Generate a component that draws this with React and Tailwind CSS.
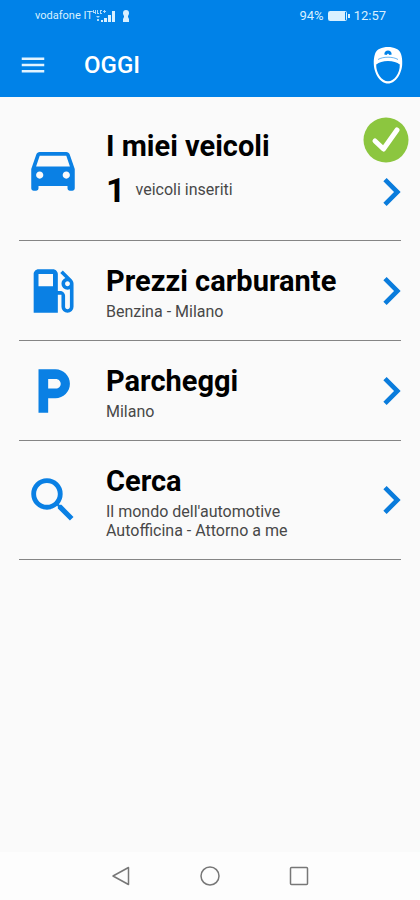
import React from 'react';
import {
    MdDirectionsCar,
    MdLocalGasStation,
    MdLocalParking,
    MdMenu,
    MdSearch,
} from 'react-icons/md';

const Chevron = () => (
    <svg viewBox="8.59 6 7.41 12" className="h-7 w-[18px] fill-current" aria-hidden="true">
        <path d="M10 6 8.59 7.41 13.17 12l-4.58 4.59L10 18l6-6z" />
    </svg>
);

const DriverIcon = () => (
    <svg viewBox="0 0 30 38" className="h-[38px] w-[30px]" aria-hidden="true">
        <path
            d="M15 1C9 1 3.5 3 2 8 1 11 .6 14 .8 18 1 27 7 37.5 15 37.5S29 27 29.2 18c.2-4-.2-7-1.2-10C26.5 3 21 1 15 1z"
            fill="#fff"
        />
        <path
            d="M3.2 18.5C6 16.2 10 15 15 15s9 1.2 11.8 3.5C27 27 21.5 35.3 15 35.3S3 27 3.2 18.5z"
            fill="#0082e8"
        />
        <path d="M5 13.5c2.6-1.5 6-2.3 10-2.3s7.4.8 10 2.3" fill="none" stroke="#0082e8" strokeWidth="0.6" />
        <path d="M11.3 8.5C11.3 6 13 4.5 15 4.5S18.7 6 18.7 8.5l-2.2.5L15 7.4 13.5 9z" fill="#0082e8" />
    </svg>
);

const StatusBar = () => (
    <div className="flex h-8 items-center justify-between pr-[34px] pl-[35px] text-[#d8f0ff]">
        <div className="flex items-center">
            <span className="text-[11px]">vodafone IT</span>
            <svg viewBox="0 0 23 14" className="h-3.5 w-[23px] fill-current" aria-hidden="true">
                <path d="M0 1h1v2h1V1h1v4H2V4H0zM4 1h1v3h1v1H4zM7 1h2v1H8v2h1v1H7zM10 2h1V1h1v1h1v1h-1v1h-1V3h-1zM3 7h4L5 9zM4 10h2v2H4z" opacity="0.8" />
                <path d="M8 11h2v2H8zM11 9h3v4h-3zM15 6h3v7h-3zM19 2h3v11h-3z" />
            </svg>
            <svg viewBox="0 0 8 14" className="ml-1.5 h-3.5 w-2 fill-current" aria-hidden="true">
                <path d="M4 1a3 3 0 0 1 3 3c0 1.3-.4 2-1 3v1L7 10v3H1v-3l1-2V7C1.4 6 1 5.3 1 4a3 3 0 0 1 3-3z" />
            </svg>
        </div>
        <div className="flex items-center text-[13px]">
            <span>94%</span>
            <svg viewBox="0 0 22 10" className="mx-1 h-2.5 w-[22px]" aria-hidden="true">
                <rect x="0.5" y="0.5" width="18" height="9" rx="1" fill="none" stroke="currentColor" />
                <rect x="1" y="1" width="16" height="8" fill="currentColor" />
                <rect x="20" y="3" width="2" height="4" fill="currentColor" />
            </svg>
            <span>12:57</span>
        </div>
    </div>
);

const Row = ({ icon: Icon, title, lines }) => (
    <li>
        <button type="button" className="flex w-full items-center border-b border-[#858585] text-left">
            <Icon className="ml-[5px] size-[58px] shrink-0 text-[#0a80e4]" />
            <span className="ml-6 flex-1 pt-6 pb-[19px]">
                <span className="block text-[29px] leading-8 font-bold">{title}</span>
                <span className="mt-[5px] block text-base leading-[19px] text-[#484848]">
                    {lines.map((line) => (
                        <span key={line} className="block">{line}</span>
                    ))}
                </span>
            </span>
            <span className="text-[#0a7cdc]">
                <Chevron />
            </span>
        </button>
    </li>
);

const VehiclesRow = ({ count }) => (
    <li className="relative">
        <button type="button" className="flex w-full items-center border-b border-[#858585] text-left">
            <MdDirectionsCar className="ml-[5px] size-[58px] shrink-0 text-[#0a80e4]" />
            <span className="ml-6 flex-1 pt-[33px] pb-[30px]">
                <span className="block text-[29px] leading-8 font-bold">I miei veicoli</span>
                <span className="mt-2 flex items-center gap-2.5 leading-10">
                    <span className="text-[34px] font-bold">{count}</span>
                    <span className="text-base text-[#484848]">veicoli inseriti</span>
                </span>
            </span>
            <span className="mb-[34px] self-end text-[#0a7cdc]">
                <Chevron />
            </span>
        </button>
        <svg viewBox="0 0 46 46" className="absolute top-5 -right-2 size-[46px]" aria-hidden="true">
            <circle cx="23" cy="23" r="22.5" fill="#8cc63f" />
            <path d="M12 24 20.5 32 34 13" fill="none" stroke="#fff" strokeWidth="5" strokeLinecap="round" strokeLinejoin="round" />
        </svg>
    </li>
);

const rows = [
    { icon: MdLocalGasStation, title: 'Prezzi carburante', lines: ['Benzina - Milano'] },
    { icon: MdLocalParking, title: 'Parcheggi', lines: ['Milano'] },
    { icon: MdSearch, title: 'Cerca', lines: ["Il mondo dell'automotive", 'Autofficina - Attorno a me'] },
];

const App = () => {
    return (
        <div className="flex min-h-screen flex-col bg-[#fafafa] font-[Roboto,sans-serif] text-black">
            <header className="bg-[#0082e8] text-white">
                <StatusBar />
                <div className="flex h-[65px] items-center pr-[17px] pl-[18px]">
                    <button type="button" aria-label="Menu">
                        <MdMenu className="size-[30px] text-[#e2f4ff]" />
                    </button>
                    <h1 className="ml-9 flex-1 text-2xl font-medium">OGGI</h1>
                    <button type="button" aria-label="Profilo">
                        <DriverIcon />
                    </button>
                </div>
            </header>

            <main className="flex-1 px-[19px]">
                <ul>
                    <VehiclesRow count={1} />
                    {rows.map((row) => (
                        <Row key={row.title} {...row} />
                    ))}
                </ul>
            </main>

            <nav className="flex h-12 items-center justify-center gap-[65px] bg-[#fdfdfd] text-[#777777]">
                <button type="button" aria-label="Indietro">
                    <svg viewBox="0 0 24 24" className="size-6" fill="none" stroke="currentColor" strokeWidth="1.5" strokeLinejoin="round">
                        <path d="M19.5 3.5v17L4 12z" />
                    </svg>
                </button>
                <button type="button" aria-label="Home">
                    <svg viewBox="0 0 24 24" className="size-6" fill="none" stroke="currentColor" strokeWidth="1.5">
                        <circle cx="12" cy="12" r="9" />
                    </svg>
                </button>
                <button type="button" aria-label="Recenti">
                    <svg viewBox="0 0 24 24" className="size-6" fill="none" stroke="currentColor" strokeWidth="1.5">
                        <rect x="3.5" y="3.5" width="17" height="17" rx="1" />
                    </svg>
                </button>
            </nav>
        </div>
    );
};

export default App;
